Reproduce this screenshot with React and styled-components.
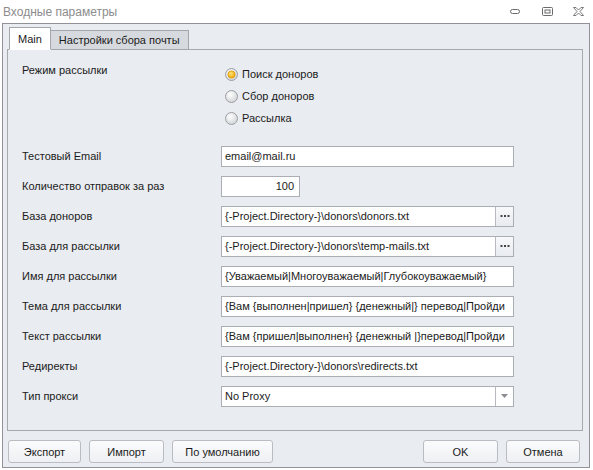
import React from 'react';
import styled, { createGlobalStyle } from 'styled-components';

const GlobalStyle = createGlobalStyle`
    html, body {
        margin:0;
        padding:0;
        background:#ffffff;
    }
    * {
        box-sizing:border-box;
    }
`;

const Window = styled.div`
    width:593px;
    height:470px;
    display:flex;
    flex-direction:column;
    background:#ffffff;
    font-family:"Liberation Sans", Arial, sans-serif;
    font-size:11px;
    color:#1b1b1b;
    overflow:hidden;
`;

const TitleBar = styled.div`
    height:23px;
    display:flex;
    align-items:center;
    justify-content:space-between;
    padding-left:3px;
`;

const Title = styled.span`
    font-size:12px;
    color:#8c8c8c;
`;

const Controls = styled.div`
    display:flex;
    align-items:center;
    height:100%;
`;

const ControlBtn = styled.div`
    width:${p => p.w}px;
    height:23px;
    display:flex;
    align-items:center;
    justify-content:center;
`;

const Frame = styled.div`
    flex:1;
    margin:0 3px 2px 2px;
    border:1px solid #8f9399;
    background:#e9ecf0;
    display:flex;
    flex-direction:column;
`;

const TabBar = styled.div`
    display:flex;
    align-items:flex-end;
    height:26px;
    padding-left:6px;
    margin-bottom:-1px;
    position:relative;
    z-index:1;
`;

const Tab = styled.div`
    height:${p => p.active ? 23 : 20}px;
    padding:0 ${p => p.active ? 8 : 8}px;
    display:flex;
    align-items:center;
    border:1px solid #a3a7ad;
    border-bottom:${p => p.active ? '1px solid #ffffff' : '1px solid #a3a7ad'};
    border-left:${p => p.active ? '1px solid #a3a7ad' : 'none'};
    background:${p => p.active ? '#ffffff' : '#d6d9de'};
    color:#1b1b1b;
`;

const Panel = styled.div`
    margin:0 6px 0 4px;
    height:382px;
    border:1px solid #a6aab0;
    background:#e9ecf0;
    padding:13px 14px 0 14px;
    display:flex;
    flex-direction:column;
`;

const ModeRow = styled.div`
    display:grid;
    grid-template-columns:199px 1fr;
    margin-bottom:12px;
`;

const ModeLabel = styled.div`
    line-height:14px;
`;

const RadioGroup = styled.div`
    display:flex;
    flex-direction:column;
    padding-left:4px;
`;

const RadioItem = styled.div`
    height:22px;
    display:flex;
    align-items:center;
    gap:4px;
`;

const Row = styled.div`
    display:grid;
    grid-template-columns:199px 1fr;
    align-items:center;
    height:30px;
`;

const Field = styled.div`
    width:${p => p.w || 293}px;
    height:21px;
    border:1px solid #abaeb4;
    background:#ffffff;
    display:flex;
    align-items:stretch;
`;

const FieldText = styled.div`
    flex:1;
    display:flex;
    align-items:center;
    justify-content:${p => p.right ? 'flex-end' : 'flex-start'};
    padding:0 ${p => p.right ? 5 : 3}px 0 3px;
    white-space:nowrap;
    overflow:hidden;
`;

const SideBtn = styled.div`
    width:18px;
    border-left:1px solid #b6b9be;
    background:${p => p.plain ? '#ffffff' : 'linear-gradient(#f8f9fb, #e8ebef)'};
    display:flex;
    align-items:center;
    justify-content:center;
`;

const Footer = styled.div`
    display:flex;
    align-items:center;
    padding:9px 0 0 5px;
    gap:8px;
`;

const Spacer = styled.div`
    flex:1;
`;

const Button = styled.div`
    width:${p => p.w}px;
    height:23px;
    border:1px solid #b9bdc3;
    border-radius:3px;
    background:linear-gradient(#fbfbfc, #eef0f3);
    display:flex;
    align-items:center;
    justify-content:center;
    margin-right:${p => p.last ? 9 : 0}px;
`;

const Radio = ({ checked }) => (
    <svg width="13" height="13" viewBox="0 0 13 13">
        <defs>
            <radialGradient id="rg" cx="40%" cy="35%" r="70%">
                <stop offset="0%" stopColor="#ffffff" />
                <stop offset="100%" stopColor="#cfd1d4" />
            </radialGradient>
            <radialGradient id="og" cx="40%" cy="35%" r="70%">
                <stop offset="0%" stopColor="#ffe27a" />
                <stop offset="100%" stopColor="#f0a400" />
            </radialGradient>
        </defs>
        <circle cx="6.5" cy="6.5" r="6" fill="url(#rg)" stroke="#9c9fa4" />
        {checked && <circle cx="6.5" cy="6.5" r="3.6" fill="url(#og)" stroke="#d99a00" strokeWidth="0.8" />}
    </svg>
);

const Dots = () => (
    <svg width="10" height="4" viewBox="0 0 10 4">
        <rect x="0.5" y="1" width="2" height="2" fill="#444" />
        <rect x="4" y="1" width="2" height="2" fill="#444" />
        <rect x="7.5" y="1" width="2" height="2" fill="#444" />
    </svg>
);

const Arrow = () => (
    <svg width="7" height="4" viewBox="0 0 7 4">
        <path d="M0 0 H7 L3.5 4 Z" fill="#8a8d92" />
    </svg>
);

// the two long templates are shown cut at the field edge, as in the dialog
const fields = [
    { label: 'Тестовый Email', value: 'email@mail.ru' },
    { label: 'Количество отправок за раз', value: '100', w: 79, right: true },
    { label: 'База доноров', value: '{-Project.Directory-}\\donors\\donors.txt', dots: true },
    { label: 'База для рассылки', value: '{-Project.Directory-}\\donors\\temp-mails.txt', dots: true },
    { label: 'Имя для рассылки', value: '{Уважаемый|Многоуважаемый|Глубокоуважаемый}' },
    { label: 'Тема для рассылки', value: '{Вам {выполнен|пришел} {денежный|} перевод|Пройди' },
    { label: 'Текст рассылки', value: '{Вам {пришел|выполнен} {денежный |}перевод|Пройди' },
    { label: 'Редиректы', value: '{-Project.Directory-}\\donors\\redirects.txt' },
    { label: 'Тип прокси', value: 'No Proxy', select: true },
];

export default function App() {
    return (
        <Window>
            <GlobalStyle />
            <TitleBar>
                <Title>Входные параметры</Title>
                <Controls>
                    <ControlBtn w={32}>
                        <svg width="10" height="5" viewBox="0 0 10 5">
                            <rect x="0.5" y="0.5" width="9" height="4" rx="2" fill="none" stroke="#6b6b6b" />
                        </svg>
                    </ControlBtn>
                    <ControlBtn w={32}>
                        <svg width="11" height="9" viewBox="0 0 11 9">
                            <rect x="0.5" y="0.5" width="10" height="8" rx="1" fill="none" stroke="#6b6b6b" />
                            <rect x="3" y="3" width="5" height="3" fill="none" stroke="#6b6b6b" />
                        </svg>
                    </ControlBtn>
                    <ControlBtn w={30}>
                        <svg width="11" height="9" viewBox="0 0 11 9">
                            <path d="M0.5 0.5 H3 L5.5 3 L8 0.5 H10.5 L7 4.5 L10.5 8.5 H8 L5.5 6 L3 8.5 H0.5 L4 4.5 Z"
                                fill="none" stroke="#6b6b6b" strokeWidth="0.9" />
                        </svg>
                    </ControlBtn>
                </Controls>
            </TitleBar>
            <Frame>
                <TabBar>
                    <Tab active>Main</Tab>
                    <Tab>Настройки сбора почты</Tab>
                </TabBar>
                <Panel>
                    <ModeRow>
                        <ModeLabel>Режим рассылки</ModeLabel>
                        <RadioGroup>
                            <RadioItem><Radio checked />Поиск доноров</RadioItem>
                            <RadioItem><Radio />Сбор доноров</RadioItem>
                            <RadioItem><Radio />Рассылка</RadioItem>
                        </RadioGroup>
                    </ModeRow>
                    {fields.map(f => (
                        <Row key={f.label}>
                            <span>{f.label}</span>
                            <Field w={f.w}>
                                <FieldText right={f.right}>{f.value}</FieldText>
                                {f.dots && <SideBtn><Dots /></SideBtn>}
                                {f.select && <SideBtn plain><Arrow /></SideBtn>}
                            </Field>
                        </Row>
                    ))}
                </Panel>
                <Footer>
                    <Button w={73}>Экспорт</Button>
                    <Button w={75}>Импорт</Button>
                    <Button w={101}>По умолчанию</Button>
                    <Spacer />
                    <Button w={75}>OK</Button>
                    <Button w={74} last>Отмена</Button>
                </Footer>
            </Frame>
        </Window>
    );
}
